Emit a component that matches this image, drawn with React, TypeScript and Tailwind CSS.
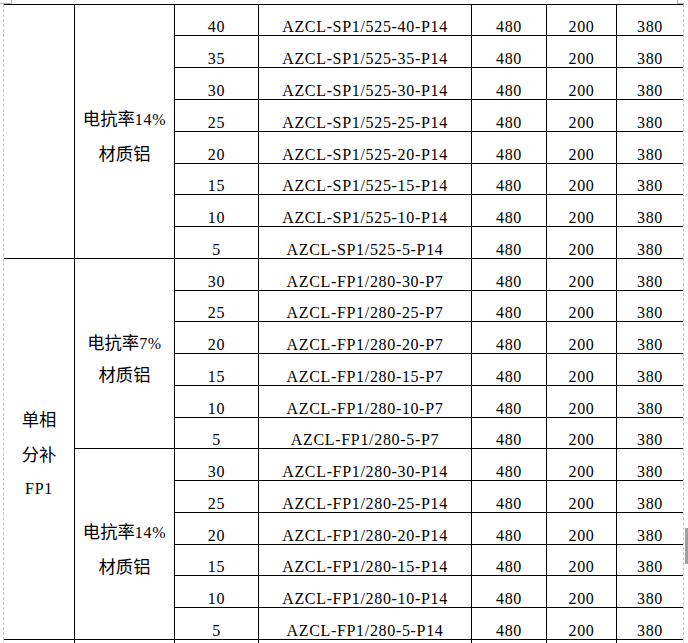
import React from "react";

const M = "font-['Liberation_Serif',serif] text-[16px] tracking-[0.67px]";
const C = "font-['Noto_Sans_CJK_SC',sans-serif] text-[17.33px]";

type Sec = { label: string; pct: string; rows: { n: number; model: string }[] };

const mk = (prefix: string, suffix: string, ns: number[]) =>
  ns.map((n) => ({ n, model: `${prefix}-${n}-${suffix}` }));

const sections: Sec[] = [
  { label: "电抗率", pct: "14%", rows: mk("AZCL-SP1/525", "P14", [40, 35, 30, 25, 20, 15, 10, 5]) },
  { label: "电抗率", pct: "7%", rows: mk("AZCL-FP1/280", "P7", [30, 25, 20, 15, 10, 5]) },
  { label: "电抗率", pct: "14%", rows: mk("AZCL-FP1/280", "P14", [30, 25, 20, 15, 10, 5]) },
];

const cell = "border-r border-b border-black flex items-end justify-center leading-[16px] pb-0 text-black";
const lastCell = "border-b border-black flex items-end justify-center leading-[16px] pb-0 text-black";

function DataRow({ n, model }: { n: number; model: string }) {
  return (
    <>
      <div className={`${cell} col-start-3`}>
        <span className={M}>{n}</span>
      </div>
      <div className={cell}>
        <span className={M}>{model}</span>
      </div>
      <div className={cell}>
        <span className={M}>480</span>
      </div>
      <div className={cell}>
        <span className={M}>200</span>
      </div>
      <div className={lastCell}>
        <span className={M}>380</span>
      </div>
    </>
  );
}

function SecLabel({ s, span, pt, h }: { s: Sec; span: string; pt: string; h: string }) {
  return (
    <div className={`col-start-2 ${span} border-r border-b border-black flex flex-col items-center ${pt}`}>
      <div className={`${h} whitespace-nowrap`}>
        <span className={C}>{s.label}</span>
        <span className={M}>{s.pct}</span>
      </div>
      <div className={`${h} whitespace-nowrap`}>
        <span className={C}>材质铝</span>
      </div>
    </div>
  );
}

export default function App() {
  return (
    <div className="relative w-[688px] h-[643px] overflow-hidden bg-white">
      {/* page corner marks */}
      <div className="absolute left-0 top-[3px] w-[12px] h-px bg-[#b4b4b4]" />
      <div className="absolute left-[11px] top-0 w-px h-[4px] bg-[#b4b4b4]" />
      <div className="absolute left-[677px] top-0 w-px h-[4px] bg-[#b4b4b4]" />
      <div className="absolute left-[677px] top-[3px] w-[7px] h-px bg-[#b4b4b4]" />
      {/* scroll marker */}
      <div className="absolute left-[685px] top-[528px] w-[3px] h-[36px] bg-[#a0a0a0]" />

      <div className="ml-[3px] mt-[4px] w-[681px] border-t border-t-black border-l border-r border-l-[#c4c4c4] border-r-[#c4c4c4] border-dashed">
        <div className="grid grid-cols-[71px_100px_84px_213px_75px_70px_66px] grid-rows-[31px_32px_32px_32px_32px_31px_32px_32px_32px_31px_32px_32px_32px_31px_32px_32px_32px_31px_32px_32px_10px] border-t border-black -mt-px">
          {/* section 1 */}
          <div className="col-start-1 row-start-1 row-span-8 border-r border-b border-black" />
          <SecLabel s={sections[0]} span="row-start-1 row-span-8" pt="pt-[95px]" h="h-[35px] leading-[35px]" />
          {sections[0].rows.map((r) => (
            <DataRow key={"a" + r.n} {...r} />
          ))}
          {/* col 1 for sections 2+3 */}
          <div className="col-start-1 row-start-9 row-span-12 border-r border-b border-black flex flex-col items-center pt-[142px]">
            <div className={`${C} h-[35px] leading-[35px]`}>单相</div>
            <div className={`${C} h-[35px] leading-[35px]`}>分补</div>
            <div className={`${M} h-[35px] leading-[35px]`}>FP1</div>
          </div>
          <SecLabel s={sections[1]} span="row-start-9 row-span-6" pt="pt-[67px]" h="h-[32px] leading-[32px]" />
          {sections[1].rows.map((r) => (
            <DataRow key={"b" + r.n} {...r} />
          ))}
          <SecLabel s={sections[2]} span="row-start-15 row-span-6" pt="pt-[64px]" h="h-[35px] leading-[35px]" />
          {sections[2].rows.map((r) => (
            <DataRow key={"c" + r.n} {...r} />
          ))}
          {/* partial next row */}
          <div className="col-start-1 border-r border-black" />
          <div className="border-r border-black" />
          <div className="border-r border-black" />
          <div className="border-r border-black" />
          <div className="border-r border-black" />
          <div className="border-r border-black" />
          <div />
        </div>
      </div>
    </div>
  );
}
